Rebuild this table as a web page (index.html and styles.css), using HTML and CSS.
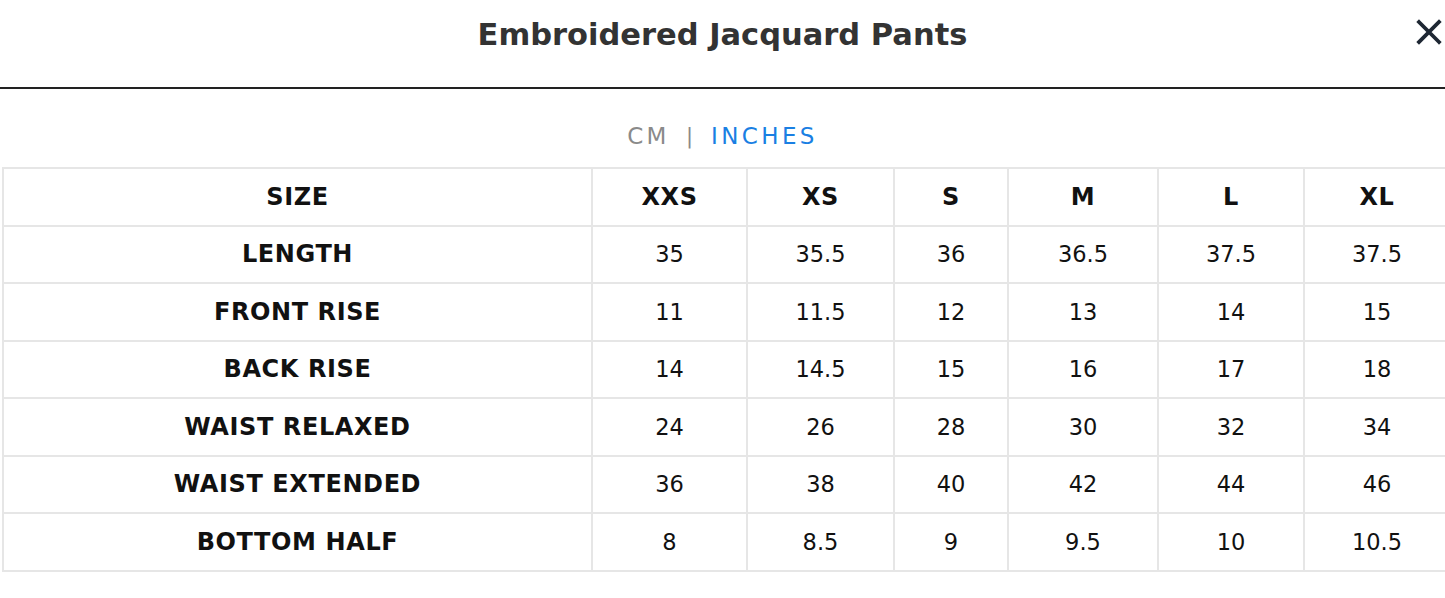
FILE: index.html
```html
<!DOCTYPE html>
<html>
<head>
<meta charset="utf-8">
<link rel="stylesheet" href="styles.css">
</head>
<body>
<div class="modal">
  <header class="modal-header">
    <h1 class="title">Embroidered Jacquard Pants</h1>
    <button class="close" aria-label="Close">
      <svg width="26" height="26" viewBox="0 0 26 26"><path d="M3 3 L23 23 M23 3 L3 23" stroke="#1e2733" stroke-width="3.8" stroke-linecap="square"/></svg>
    </button>
  </header>
  <div class="units">
    <span class="unit">CM</span>
    <span class="sep">|</span>
    <span class="unit active">INCHES</span>
  </div>
  <table class="size-table">
    <colgroup>
      <col class="c0"><col class="c1"><col class="c2"><col class="c3"><col class="c4"><col class="c5"><col class="c6">
    </colgroup>
    <thead>
      <tr><th>SIZE</th><th>XXS</th><th>XS</th><th>S</th><th>M</th><th>L</th><th>XL</th></tr>
    </thead>
    <tbody>
      <tr><th>LENGTH</th><td>35</td><td>35.5</td><td>36</td><td>36.5</td><td>37.5</td><td>37.5</td></tr>
      <tr><th>FRONT RISE</th><td>11</td><td>11.5</td><td>12</td><td>13</td><td>14</td><td>15</td></tr>
      <tr><th>BACK RISE</th><td>14</td><td>14.5</td><td>15</td><td>16</td><td>17</td><td>18</td></tr>
      <tr><th>WAIST RELAXED</th><td>24</td><td>26</td><td>28</td><td>30</td><td>32</td><td>34</td></tr>
      <tr><th>WAIST EXTENDED</th><td>36</td><td>38</td><td>40</td><td>42</td><td>44</td><td>46</td></tr>
      <tr><th>BOTTOM HALF</th><td>8</td><td>8.5</td><td>9</td><td>9.5</td><td>10</td><td>10.5</td></tr>
    </tbody>
  </table>
</div>
</body>
</html>
```

FILE: styles.css
```css
html, body {
  margin: 0;
  padding: 0;
  background: #fff;
  overflow: hidden;
}
body {
  font-family: "DejaVu Sans", "Open Sans", sans-serif;
  color: #111;
}
.modal {
  width: 1445px;
}
.modal-header {
  position: relative;
  height: 87px;
  border-bottom: 2px solid #222;
  display: flex;
  align-items: center;
  justify-content: center;
}
.title {
  margin: 0;
  font-size: 30.5px;
  font-weight: bold;
  color: #333;
  position: relative;
  top: -9px;
}
.close {
  position: absolute;
  right: 1px;
  top: 19px;
  background: none;
  border: 0;
  padding: 0;
  width: 30px;
  height: 28px;
  cursor: pointer;
}
.units {
  height: 78px;
  display: flex;
  align-items: center;
  justify-content: center;
  gap: 16px;
  font-size: 23px;
  letter-spacing: 3.4px;
  padding-top: 15px;
  box-sizing: border-box;
}
.unit { color: #8a8a8a; }
.unit.active { color: #1a7fe3; margin-left: 2px; }
.sep { color: #888; font-size: 21px; letter-spacing: 0; }
.size-table {
  border-collapse: collapse;
  table-layout: fixed;
  width: 1449px;
  margin-left: 2px;
}
.size-table th, .size-table td {
  border: 2px solid #e6e6e6;
  height: 55.5px;
  padding: 0;
  text-align: center;
  font-size: 22.5px;
  color: #111;
}
.size-table th {
  font-weight: bold;
  font-size: 24px;
  letter-spacing: 0.6px;
}
.size-table td { font-weight: normal; }
.c0 { width: 589px; }
.c1 { width: 155px; }
.c2 { width: 147px; }
.c3 { width: 114px; }
.c4 { width: 150px; }
.c5 { width: 146px; }
.c6 { width: 146px; }
```
